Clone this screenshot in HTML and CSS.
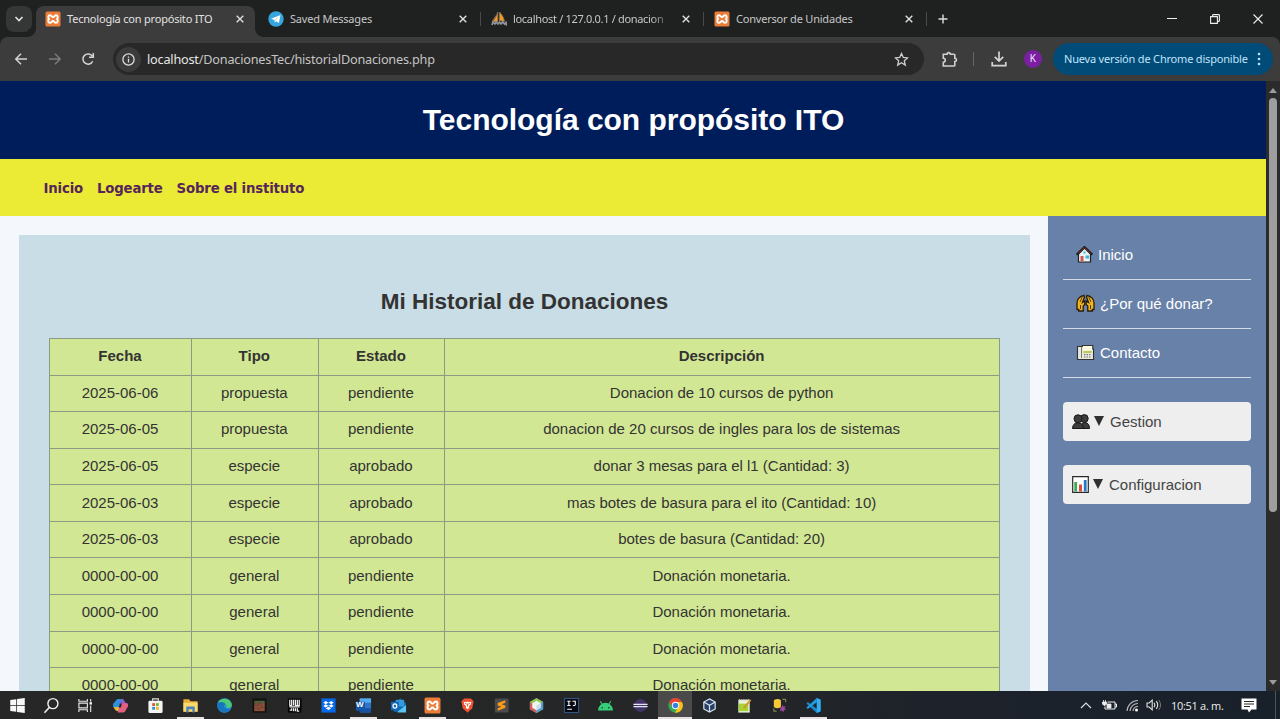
FILE: index.html
```html
<!DOCTYPE html>
<html lang="es">
<head>
<meta charset="utf-8">
<title>Tecnología con propósito ITO</title>
<link rel="stylesheet" href="styles.css">
</head>
<body>
<svg class="defs" width="0" height="0">
  <symbol id="x" viewBox="0 0 8 8"><path d="M.7.7 7.3 7.3M7.3.7.7 7.3" stroke="#dedede" stroke-width="1.4" fill="none"/></symbol>
  <symbol id="xampp" viewBox="0 0 16 16"><rect x=".5" y=".5" width="15" height="15" rx="1.5" fill="#eb7d38"/><path d="M5 4.200C2.900 4.200 2.900 7 4 8 2.900 9 2.900 11.800 5 11.800 6.800 11.800 6.600 10 8 10s1.200 1.800 3 1.800c2.100 0 2.100-2.800 1-3.800 1.100-1 1.100-3.800-1-3.800-1.800 0-1.600 2.100-3 2.100S6.800 4.200 5 4.200z" fill="none" stroke="#fff" stroke-width="1.900"/></symbol>
</svg>
<div class="tabstrip">
  <div class="tab-search"><svg width="10" height="6" viewBox="0 0 10 6"><path d="m1.500 1 3.500 3.500L8.500 1" fill="none" stroke="#e3e3e3" stroke-width="1.600"/></svg></div>
  <div class="tab active"><svg class="fav"><use href="#xampp"/></svg><span class="label l1">Tecnología con propósito ITO</span><svg class="close"><use href="#x"/></svg></div>
  <div class="tab"><svg class="fav" viewBox="0 0 16 16"><circle cx="8" cy="8" r="7.700" fill="#35a6de"/><path d="m3 7.800 9.500-3.900-1.600 8.200-2.600-1.900-1.500 1.400-.3-2.500z" fill="#fff"/><path d="m6.500 9.100 4.300-3.600-3.200 4.100-.8 2z" fill="#b7d9ec"/></svg><span class="label l2">Saved Messages</span><svg class="close"><use href="#x"/></svg></div>
  <div class="tab sep"><svg class="fav" viewBox="0 0 16 16"><path d="M6.800 1v9.500H1.500C4 8 5.500 5 6.800 1zM8.500 1c2.700 3 4.300 5.500 5 9.500l-5-1zM5 4.500 1.500 9.500" fill="#f59b22" stroke="#8c7460" stroke-width=".8"/><path d="m1 14 1-3 2 2 1-2 2 2 1.500-2 1.500 2 1.500-2 2 2 1.500-1.500.5 3" fill="none" stroke="#9898a0" stroke-width="1.600"/></svg><span class="label l3">localhost / 127.0.0.1 / donacion</span><svg class="close"><use href="#x"/></svg></div>
  <div class="tab sep"><svg class="fav"><use href="#xampp"/></svg><span class="label l4">Conversor de Unidades</span><svg class="close"><use href="#x"/></svg></div>
  <div class="newtab"><svg width="10" height="10" viewBox="0 0 10 10"><path d="M5 .5v9M.5 5h9" stroke="#ddd" stroke-width="1.400"/></svg></div>
  <div class="window-buttons">
    <svg width="10" height="10" viewBox="0 0 10 10"><path d="M0 4.500h10" stroke="#eee"/></svg>
    <svg width="10" height="10" viewBox="0 0 10 10"><path d="M.6 2.600h6.800v6.800H.6zM2.600 2.500V1.300q0-.7.7-.7h5.400q.7 0 .7.700v5.400q0 .7-.7.700H7.500" fill="none" stroke="#eee" stroke-width="1.100"/></svg>
    <svg width="10" height="10" viewBox="0 0 10 10"><path d="m.5.500 9 9m0-9-9 9" stroke="#eee" stroke-width="1.100"/></svg>
  </div>
</div>
<div class="toolbar-wrap"><div class="toolbar">
  <svg class="nav-i" viewBox="0 0 14 14"><path d="M13 7H2m5-5.200L1.800 7 7 12.200" fill="none" stroke="#d4d4d4" stroke-width="1.500"/></svg>
  <svg class="nav-i" viewBox="0 0 14 14"><path d="M1 7h11M7 1.800 12.200 7 7 12.200" fill="none" stroke="#7c7c7c" stroke-width="1.400"/></svg>
  <svg class="nav-i reload" viewBox="0 0 14 14"><path d="M11.700 9.200A5.100 5.100 0 1 1 11.300 4.200M12.300 1v4.200H8" fill="none" stroke="#d4d4d4" stroke-width="1.500"/></svg>
  <div class="omnibox">
    <span class="info"><svg width="13" height="13" viewBox="0 0 13 13"><circle cx="6.500" cy="6.500" r="5.600" fill="none" stroke="#ddd" stroke-width="1.300"/><path d="M6.500 5.700v3.800M6.500 3.400v1.300" stroke="#ddd" stroke-width="1.300"/></svg></span>
    <span class="url"><b>localhost</b>/DonacionesTec/historialDonaciones.php</span>
    <svg class="star" viewBox="0 0 15 15"><path d="m7.500 1.500 1.800 4 4.300.4-3.300 2.900 1 4.300-3.800-2.300-3.800 2.300 1-4.300L1.400 5.900l4.300-.4z" fill="none" stroke="#d0d0d0" stroke-width="1.300"/></svg>
  </div>
  <svg class="ext" viewBox="0 0 17 17"><path d="M2.300 3.300h3.800c0-2.300 3.300-2.300 3.300 0h3.600q.8 0 .8.800v3.200c2.200 0 2.200 3.200 0 3.200v3.700q0 .8-.8.800H2.300v-3.800c2.600 0 2.600-3.900 0-3.900z" fill="none" stroke="#d0d0d0" stroke-width="1.600"/></svg>
  <i class="bar"></i>
  <svg class="down" viewBox="0 0 16 16"><path d="M8 .5v9.200M3.800 5.800 8 10l4.200-4.200M1.200 11v3.700h13.600V11" fill="none" stroke="#d4d4d4" stroke-width="1.700"/></svg>
  <span class="avatar">K</span>
  <div class="update"><span>Nueva versión de Chrome disponible</span><svg width="4" height="14" viewBox="0 0 4 14"><g fill="#b9e3fb"><circle cx="2" cy="2" r="1.300"/><circle cx="2" cy="7" r="1.300"/><circle cx="2" cy="12" r="1.300"/></g></svg></div>
</div></div>
<div class="viewport">
  <div class="page">
    <header class="site-header"><h1>Tecnología con propósito ITO</h1></header>
    <nav class="site-nav"><a>Inicio</a><a>Logearte</a><a>Sobre el instituto</a></nav>
    <div class="columns">
      <main class="panel">
        <h2>Mi Historial de Donaciones</h2>
        <div class="grid">
          <b>Fecha</b><b>Tipo</b><b>Estado</b><b>Descripción</b>
          <span>2025-06-06</span><span>propuesta</span><span>pendiente</span><span>Donacion de 10 cursos de python</span>
          <span>2025-06-05</span><span>propuesta</span><span>pendiente</span><span>donacion de 20 cursos de ingles para los de sistemas</span>
          <span>2025-06-05</span><span>especie</span><span>aprobado</span><span>donar 3 mesas para el l1 (Cantidad: 3)</span>
          <span>2025-06-03</span><span>especie</span><span>aprobado</span><span>mas botes de basura para el ito (Cantidad: 10)</span>
          <span>2025-06-03</span><span>especie</span><span>aprobado</span><span>botes de basura (Cantidad: 20)</span>
          <span>0000-00-00</span><span>general</span><span>pendiente</span><span>Donación monetaria.</span>
          <span>0000-00-00</span><span>general</span><span>pendiente</span><span>Donación monetaria.</span>
          <span>0000-00-00</span><span>general</span><span>pendiente</span><span>Donación monetaria.</span>
          <span>0000-00-00</span><span>general</span><span>pendiente</span><span>Donación monetaria.</span>
        </div>
      </main>
      <aside class="side">
        <a class="link"><svg width="17" height="17" viewBox="0 0 17 17"><path d="M2.500 8v8h12V8l-6-6z" fill="#e9f2f4" stroke="#202020" stroke-width="1.200"/><path d="M.6 8.700 8.500 1l7.900 7.700" fill="none" stroke="#222" stroke-width="2.200"/><path d="m2.500 7.500 6-5.800 6 5.800" fill="none" stroke="#a5332e" stroke-width=".7"/><path d="M4.500 10h3v5.500h-3z" fill="#d3574b"/><path d="M9.500 9.500h3.500v3H9.500zM7.500 5.500h2v2h-2z" fill="#39b6d8"/></svg><span>Inicio</span></a>
        <a class="link"><svg width="19" height="18" viewBox="0 0 19 18"><g fill="#f3b51f" stroke="#251c0b" stroke-width="1.300"><path d="M8 1.500C3.500 2 1 5.500 1 9v6.500h1.700V17h4.500v-5l1.600-1.500V7L6.500 8.500 8.500 3z"/><path d="M11 1.500c4.500.5 7 4 7 7.500v6.500h-1.700V17h-4.500v-5l-1.600-1.500V7l2.300 1.500L10.500 3z"/><path d="m4 8 2.300-5M15 8l-2.300-5M4.500 11v4M14.500 11v4" fill="none" stroke-width=".8"/></g></svg><span>¿Por qué donar?</span></a>
        <a class="link"><svg width="19" height="17" viewBox="0 0 19 17"><path d="M1.500 2.500h4.800v-1h10.500V5h.7v10.500h-16z" fill="#e8e8dc" stroke="#333" stroke-width="1.100"/><path d="M5.500 3v11" stroke="#777"/><path d="M7 2h9v4.500H7z" fill="#fafbdc"/><path d="M7.500 7h8v2h-8z" fill="#b5cb55"/><path d="M8 10.700h7.500M8 13h7.500" stroke="#777" stroke-width="1.200" stroke-dasharray="1.500 1"/></svg><span>Contacto</span></a>
        <div class="menu"><svg width="18" height="15" viewBox="0 0 18 15"><g fill="#3c3c3c" stroke="#171717"><circle cx="12.300" cy="4.500" r="3.900"/><path d="M8 14.500q.5-6 5-6 4.500.5 4.500 6z"/><circle cx="6" cy="4.800" r="4"/><path d="M.5 14.500Q.8 8.800 6 8.800q5.200 0 5.500 5.700z"/></g></svg><i class="caret"></i><span>Gestion</span></div>
        <div class="menu"><svg class="chart" width="17" height="17" viewBox="0 0 17 17"><path d="M.7.700h15.600v15.600H.7z" fill="#fff" stroke="#292929" stroke-width="1.200"/><path d="M2.300 6h2.800v9.500H2.300z" fill="#36ac54"/><path d="M7 8.500h3v7H7z" fill="#df4a3b"/><path d="M11.800 4h2.800v11.500h-2.800z" fill="#2479c5"/></svg><i class="caret"></i><span>Configuracion</span></div>
      </aside>
    </div>
  </div>
  <div class="scrollbar"><i class="up"></i><i class="thumb"></i><i class="dn"></i></div>
</div>
<div class="taskbar">
  <div class="sys"><svg viewBox="0 0 18 18"><path d="m1.300 3.200 6.400-.9v6.200H1.300zM8.500 2.200l8.200-1.200v7.500H8.500zM1.300 9.300h6.400v6.300l-6.400-.9zM8.500 9.300h8.200V17l-8.200-1.200z" fill="#f7f7f7"/></svg></div>
  <div class="sys"><svg viewBox="0 0 18 18"><circle cx="10.500" cy="7" r="5.300" fill="none" stroke="#eee" stroke-width="1.500"/><path d="m6.800 11-5.300 5.700" stroke="#eee" stroke-width="1.600"/></svg></div>
  <div class="sys"><svg viewBox="0 0 18 18"><path d="M2 2v2.500h9V2M2 16v-2.500h9V16M2 6.500h9v5H2zM14.500 2v3M14.500 9v7" fill="none" stroke="#e8e8e8" stroke-width="1.200"/><path d="M13.300 5.500h2.500v2.500h-2.500z" fill="#fff"/></svg></div>
  <div class="apps">
    <div><svg viewBox="0 0 18 18"><path d="M5.500 2H12l-3 9.500H3Q0 11 1.500 7z" fill="#2f8fdc"/><path d="M1.500 10.500h6L9 15H6.500Q3.500 15 1.500 10.500z" fill="#dcb93d"/><path d="M10.500 2Q13 2 14 6h1q3 .5 1.500 4.500h-6L8.500 6z" fill="#8a5fd4"/><path d="M9 6.500h6q3 1 1.500 4L14 15q-.8 1.500-2.500 1.500H6z" fill="#e45f80"/><path d="m8.300 6.800 2.200.2-1 4.200-2.300-.2z" fill="#262626"/></svg></div>
    <div><svg viewBox="0 0 18 18"><path d="M6 4V2h6v2" fill="none" stroke="#ddd" stroke-width="1.300"/><rect x="1.500" y="4" width="15" height="13" rx="1.500" fill="#f3f4f5"/><path d="M5.500 6.500h3v3h-3z" fill="#e45532"/><path d="M9.500 6.500h3v3h-3z" fill="#75b72c"/><path d="M5.500 10.500h3v3h-3z" fill="#2494d8"/><path d="M9.500 10.500h3v3h-3z" fill="#f2b61a"/></svg></div>
    <div class="open"><svg viewBox="0 0 18 18"><path d="M1.500 2.500h6l1.500 2h7.500v11h-15z" fill="#e8ae38"/><path d="M1.500 6h15v9.500h-15z" fill="#fbd96d"/><path d="M4.500 16.500V10h9v6.500H11V13H7v3.500z" fill="#4c83bc"/></svg></div>
    <div><svg viewBox="0 0 18 18"><circle cx="9" cy="9" r="7.800" fill="#2393d6"/><path d="M2 6C5 0 15 0 16.700 8c.3 3-2 4-5.700 3.500 1.500-4-4-6.500-9-5.500" fill="#4dca76"/><path d="M1.500 7c3-3 8-2 8.500 1-3 .5-2 5.500 5.500 4.500-2 3-5 4.500-8 3.800C3 15 1 11 1.500 7z" fill="#1975bd"/></svg></div>
    <div><svg viewBox="0 0 18 18"><path d="M1.500 1.500h15v15h-15z" fill="#111411"/><path d="M3.500 4h11v4h-11z" fill="#4d6839"/><path d="M3.500 7h11v8h-11z" fill="#925039"/><path d="M5 5v4h3V6h3v5h3M5 12h4v2" stroke="#70443a" fill="none" stroke-width="1.500"/></svg></div>
    <div><svg viewBox="0 0 18 18"><path d="M2 1.500h14.500v15H2z" fill="#060606"/><path d="M4 3v6h2V3m2 0v6m2-6v6h2V3m2 0v6h-2M3.500 10.500h11M4 14h2v-2m2 0v3m2-3v3m2-3v3h2" stroke="#f2f2f2" stroke-width="1.300" fill="none"/></svg></div>
    <div><svg viewBox="0 0 18 18"><path d="M1.500 1.500h15v15h-15z" fill="#0669e8"/><path d="M6 4.300 9 6l3-1.700L14.500 6 12 7.800 14.500 9.500 12 11 9 9.300 6 11 3.500 9.500 6 7.800 3.500 6zM6 12l3-1.700L12 12l-3 1.800z" fill="#fff"/><path d="M9 6.200 12 7.800 9 9.300 6 7.800z" fill="#0669e8"/></svg></div>
    <div class="open"><svg viewBox="0 0 18 18"><rect x="5" y="1.500" width="12" height="15" rx="1" fill="#2f75c8"/><path d="M5 1.500h12V6H5z" fill="#55adf0"/><path d="M5 12h12v4.500H5z" fill="#184fa0"/><path d="M1 5h9.500v9.500H1z" fill="#1655a8"/></svg><em class="word">W</em></div>
    <div><svg viewBox="0 0 18 18"><path d="M4 6.500 11 1.500l6 5v9H4z" fill="#1269b5"/><path d="M6 3h9v7H6z" fill="#359bdc"/><path d="m8 15.500 9-7v8H8z" fill="#58c6f0"/><path d="M1 5h8.500v9H1z" fill="#1269bc"/><ellipse cx="5.200" cy="9.500" rx="2" ry="2.300" fill="none" stroke="#fff" stroke-width="1.300"/></svg></div>
    <div class="open"><svg><use href="#xampp"/></svg></div>
    <div><svg viewBox="0 0 18 18"><path d="m5.500 1.500-3 3L4 12l5 4.800L14 12l1.500-7.500-3-3z" fill="#f05330"/><path d="m5 5 2.500.5L9 4.800l1.500.7L13 5l-.5 3-2 1.500.3 2L9 13l-1.800-1.500.3-2-2-1.500z" fill="#fff"/><path d="m6.500 6.700 1.700.8M11.500 6.700l-1.700.8M9 7v3" stroke="#ef5030"/></svg></div>
    <div><svg viewBox="0 0 18 18"><rect x="2" y="1.500" width="14.500" height="15" rx="1" fill="#4c4c4c"/><path d="m5 6.300 8-2.800v2.700L9 7.700l4 1.200v2.600L5 14.500v-2.700l4-1.500-4-1.200z" fill="#ff9b18"/></svg></div>
    <div><svg viewBox="0 0 18 18"><path d="m9 1 7 4v8l-7 4-7-4V5z" fill="#91c75b"/><path d="M2 5v8l7 4v-5z" fill="#d35c63"/><path d="m16 5-7 4v8l7-4z" fill="#5b9bd2"/><path d="m9 4 4.500 2.500v5L9 14l-4.500-2.500v-5z" fill="#f1f3ec"/><path d="M9 9v5l4.500-2.500v-5z" fill="#c9dcec"/></svg></div>
    <div><svg viewBox="0 0 18 18"><path d="M1.500 1.500h15v15h-15z" fill="#080b13" stroke="#355d97"/><path d="M4.500 4.500H8M6.200 4.500V9M4.500 9H8M10 4.500h3V8q0 1.300-2.500 1M4.500 13h5" stroke="#f5f5f5" fill="none" stroke-width="1.200"/></svg></div>
    <div><svg viewBox="0 0 18 18"><path d="M1.200 14.200a7.800 8.200 0 0 1 15.600 0z" fill="#36cf79"/><path d="M5 7.200 3.500 4.500M13 7.200l1.500-2.700" stroke="#36cf79" stroke-width="1.200"/><circle cx="5.500" cy="11.300" r=".8" fill="#222"/><circle cx="12.500" cy="11.300" r=".8" fill="#222"/></svg></div>
    <div><svg viewBox="0 0 18 18"><circle cx="9" cy="9" r="6.800" fill="#443568"/><path d="M1.500 7.800h15M1.500 10.300h15" stroke="#e8e4ef" stroke-width="1.300"/></svg></div>
    <div class="open current"><svg viewBox="0 0 18 18"><circle cx="9" cy="9" r="7.600" fill="#35a853"/><path d="M2.300 5.200A7.600 7.600 0 0 1 15.700 5.200L9 6.500 6 10.500z" fill="#e94335"/><path d="M15.700 5.200A7.600 7.600 0 0 1 8.300 16.600L12 10.500 9 5.200z" fill="#fbc116"/><circle cx="9" cy="9" r="3.900" fill="#fff"/><circle cx="9" cy="9" r="2.900" fill="#367fe7"/></svg></div>
    <div><svg viewBox="0 0 18 18"><path d="m9 2 6 3.300v7.400L9 16l-6-3.300V5.300z" fill="#293f62" stroke="#d5e3f4" stroke-width="1.300"/><path d="m3 5.300 6 3.400 6-3.400M9 8.700V16" fill="none" stroke="#d5e3f4" stroke-width="1.300"/></svg></div>
    <div><svg viewBox="0 0 18 18"><path d="M2.500 3h12v13.500h-12z" fill="#e8f3dc"/><path d="M3 7h10v8H3z" fill="#a6d332"/><path d="M3 3h11" stroke="#ccc" stroke-width="2" stroke-dasharray="1 1"/><path d="m8 12 7.500-9" stroke="#d5962c" stroke-width="2"/></svg></div>
    <div><svg viewBox="0 0 18 18"><path d="M3 3.500q4-3 7.500 0v7q-3.500 3-7.500 0z" fill="#f6c937"/><path d="M12 2.500h3.500v3M6 15H3v-3" fill="none" stroke="#77864d" stroke-width="1.200"/><path d="m12.500 8 .8 2.300 2.400-.4-1.300 2 1.700 1.700-2.400.2-.6 2.500-1.400-2-2.400.7 1-2.200-1.500-1.800 2.500-.2z" fill="#99489d"/></svg></div>
    <div class="open"><svg viewBox="0 0 18 18"><path d="m12.500 1 4 1.800v12.400l-4 1.800L1.500 6.800 3 5.300l9.500 7.200z" fill="#168bd2"/><path d="m12.500 1-11 10.200L3 12.700l9.500-7.200z" fill="#239be0"/><path d="m12.500 1 4 1.800v12.400l-4 1.800z" fill="#35adf3"/></svg></div>
  </div>
  <div class="tray">
    <svg width="12" height="8" viewBox="0 0 12 8"><path d="m1 7 5-5 5 5" fill="none" stroke="#ddd" stroke-width="1.200"/></svg>
    <svg class="bat" width="16" height="12" viewBox="0 0 16 12"><path d="M6.500 3H14v7H4V7.500M14 5h1.500v3H14" fill="none" stroke="#eee"/><path d="M6 5h4v4H6zM1.500 3h4v2L4 6.500H3L1.500 5zM2.500 3V1M4.500 3V1" fill="#eee" stroke="#eee" stroke-width=".8"/></svg>
    <svg class="wifi" width="13" height="13" viewBox="0 0 13 13"><g fill="none" stroke="#bbb"><path d="M1 12A11 11 0 0 1 12 1.500M4 12a8 8 0 0 1 8-7.500M7 12a5 5 0 0 1 5-4.500" stroke-width="1.100"/></g><circle cx="10.500" cy="11" r="1.500" fill="#fff"/></svg>
    <svg class="vol" width="16" height="12" viewBox="0 0 16 12"><path d="M1 4h2.200l3-2.800v9.600L3.200 8H1zM8 3.800q1.600 2.200 0 4.400M10.300 2.200q2.900 3.800 0 7.600" fill="none" stroke="#e2e2e2" stroke-width="1.100"/><path d="M12.800 1q3.500 5 0 10" fill="none" stroke="#777"/></svg>
    <span class="clock">10:51 a. m.</span>
    <svg class="note" width="16" height="15" viewBox="0 0 16 15"><path d="M.5.500h15v11h-5L8 14.500l-1.500-3h-6z" fill="#fff"/><path d="M3 3.500h10M3 6h10M3 8.500h6" stroke="#20252c"/></svg>
    <i class="desk"></i>
  </div>
</div>
</body>
</html>
```
FILE: styles.css
```css
* { box-sizing: border-box; }
body { margin: 0; width: 1280px; height: 719px; overflow: hidden; display: flex; flex-direction: column; font-family: "Liberation Sans", Arial, sans-serif; background: #1f2121; }
svg { display: block; flex: none; }
.defs { position: absolute; }
.tabstrip { height: 37px; flex: none; display: flex; padding-left: 6px; background: #1f2121; font: 12px "Noto Sans", sans-serif; color: #c7c7c7; }
.tab-search { width: 26px; height: 26px; margin: 6px 4px 0 0; border-radius: 8px; background: #353636; display: grid; place-items: center; }
.tab { position: relative; width: 219px; height: 31px; margin: 6px 4px 0 0; padding: 0 11px 5px 9px; display: flex; align-items: center; flex: none; }
.tab.active { background: #3c3c3c; color: #e2e2e2; border-radius: 8px 8px 0 0; }
.tab.active::before, .tab.active::after { content: ""; position: absolute; bottom: 0; width: 8px; height: 8px; }
.tab.active::before { left: -8px; background: radial-gradient(circle at 0 0, #1f2121 7.5px, #3c3c3c 8px); }
.tab.active::after { right: -8px; background: radial-gradient(circle at 100% 0, #1f2121 7.5px, #3c3c3c 8px); }
.tab.sep::before { content: ""; position: absolute; left: -2px; top: 6px; width: 1px; height: 14px; background: #4a4a4a; }
.fav { width: 16px; height: 16px; margin-right: 6px; }
.label { flex: 1; white-space: nowrap; line-height: 18px; font-size: 11px; letter-spacing: -.2px; }
.l3 { margin-right: 12px; letter-spacing: -.32px; -webkit-mask: linear-gradient(90deg, #000 88%, rgba(0,0,0,.15)); }
.close { width: 8px; height: 8px; }
.newtab { width: 30px; padding: 14px 0 0 11px; border-left: 1px solid #4a4a4a; height: 26px; margin-left: -2px; border-image: linear-gradient(transparent 12px, #4a4a4a 12px) 1; }
.window-buttons { margin-left: auto; display: flex; gap: 33px; padding: 14px 17px 0 0; }
.toolbar-wrap { background: #1f2121; flex: none; }
.toolbar { height: 44px; background: #3c3c3c; border-radius: 8px 8px 0 0; display: flex; align-items: center; padding-left: 14px; }
.nav-i { width: 14px; height: 14px; margin-right: 20px; }
.reload { margin: 0 21px 0 -1px; }
.omnibox { width: 811px; height: 32px; margin-left: -3px; border-radius: 16px; background: #282828; display: flex; align-items: center; padding: 0 15px 0 3px; font: 12.700px "Noto Sans", sans-serif; letter-spacing: -.21px; color: #c4c4c4; }
.info { width: 25px; height: 25px; margin-right: 6px; border-radius: 50%; background: #3b3b3b; display: grid; place-items: center; }
.url { flex: 1; white-space: nowrap; }
.url b { font-weight: 400; color: #e6e6e6; }
.star { width: 15px; height: 15px; }
.ext { width: 17px; height: 17px; margin-left: 17px; }
.bar { width: 1px; height: 14px; background: #666; margin-left: 15px; }
.down { width: 16px; height: 16px; margin-left: 17px; }
.avatar { width: 18px; height: 18px; margin-left: 17px; border-radius: 50%; background: #7a1fa2; color: #f0dff5; font: 10px/18px Roboto, sans-serif; text-align: center; }
.update { width: 220px; height: 32px; margin-left: 11px; padding: 0 12px 1px 11px; border-radius: 16px; background: #004b77; color: #c0e4fb; display: flex; align-items: center; justify-content: space-between; font: 11px "Noto Sans", sans-serif; letter-spacing: -.19px; white-space: nowrap; }
.viewport { flex: 1; min-height: 0; display: flex; }
.page { width: 1266px; height: 610px; overflow: hidden; background: #f4f7fb; }
.site-header { height: 78px; background: #001d5b; display: flex; align-items: center; justify-content: center; }
h1 { margin: 0; color: #fff; font-size: 30px; line-height: 36px; padding-left: 1px; letter-spacing: -.03px; }
.site-nav { height: 57px; background: #ebea35; display: flex; align-items: center; gap: 14px; padding: 1px 0 0 43.500px; font: bold 13.300px "DejaVu Sans", sans-serif; letter-spacing: -.18px; color: #552659; }
.columns { height: 475px; display: flex; }
.panel { width: 1011px; margin: 19px 18px 0 19px; padding: 53px 30px 0; background: #c8dde5; color: #333; flex: none; }
h2 { margin: 0 0 23px; font-size: 22.5px; line-height: 27px; text-align: center; }
.grid { display: grid; grid-template-columns: 141px 125.600px 125.600px 1fr; grid-auto-rows: 35.570px; gap: 1px; padding: 1px; background: #8b9b84; font-size: 15px; color: #333; }
.grid > * { background: #d2e793; display: flex; align-items: center; justify-content: center; padding: 0 1px 2px 0; }
.side { flex: 1; background: #6881a8; padding: 15px; font-size: 15px; color: #fff; }
.link { height: 49px; padding: 0 13px 2px; border-bottom: 1px solid #d3dbe7; display: flex; align-items: center; gap: 5px; }
.menu { height: 39px; margin-top: 24px; padding: 0 0 1px 9px; border-radius: 4px; background: #eee; color: #444; display: flex; align-items: center; }
.caret { border: 5.500px solid transparent; border-top: 10px solid #303030; border-bottom: 0; margin: 0 6px 0 4px; }
.scrollbar { width: 14px; background: #2b2b2b; display: flex; flex-direction: column; align-items: center; padding: 7px 0 6px; }
.up, .dn { border: 4px solid transparent; }
.up { border-top: 0; border-bottom: 5px solid #9b9b9b; }
.dn { border-bottom: 0; border-top: 5px solid #9b9b9b; margin-top: auto; }
.thumb { width: 8px; height: 414px; margin-top: 5px; border-radius: 4px; background: #9e9e9e; }
.taskbar { height: 28px; flex: none; display: flex; background: linear-gradient(90deg, #272727 0, #252627 55%, #1d222b 75%, #18202a); }
.sys { width: 34px; display: grid; place-items: center; }
.sys svg, .apps svg { width: 17px; height: 17px; }
.apps { display: flex; margin-left: 1.600px; }
.apps > div { width: 34.650px; display: grid; place-items: center; position: relative; }
.apps > .open::after { content: ""; position: absolute; left: 4px; right: 4px; bottom: 0; height: 2px; background: #e5e1e2; }
.apps > .current { background: #4a4a4a; }
.apps > .current::after { left: 0; right: 0; }
.word { position: absolute; left: 10px; top: 8px; font: bold 8px/12px "Liberation Sans", sans-serif; color: #fff; }
.tray { margin-left: auto; display: flex; align-items: center; color: #eee; }
.bat { margin-left: 9px; }
.wifi { margin-left: 9px; }
.vol { margin-left: 7px; }
.clock { margin-left: 9px; width: 52px; font: 11px "Open Sans", sans-serif; letter-spacing: -.3px; white-space: nowrap; }
.note { margin-left: 18px; }
.desk { width: 1px; height: 28px; margin: 0 4px 0 18px; background: #4c535b; }
```
